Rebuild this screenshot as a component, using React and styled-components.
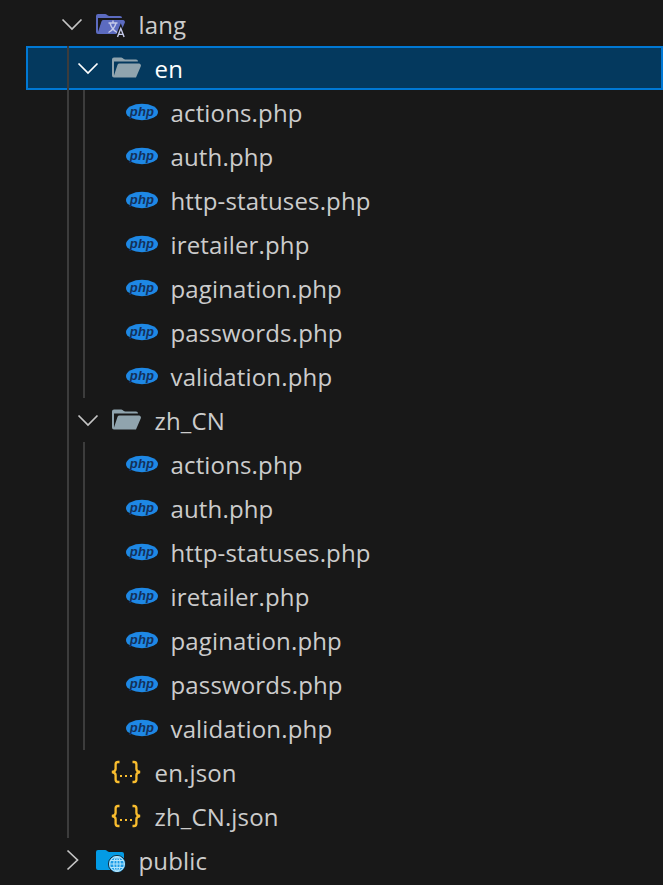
import React from "react";
import styled, { createGlobalStyle } from "styled-components";

const Global = createGlobalStyle`
  html, body { margin: 0; padding: 0; background: #181818; }
  body { overflow: hidden; }
`;

const Tree = styled.div`
  width: 637px;
  height: 885px;
  margin-left: 26px;
  padding-top: 2px;
  box-sizing: border-box;
  position: relative;
  font-family: "Open Sans", "Noto Sans", sans-serif;
  font-size: 24px;
  letter-spacing: 0.15px;
  color: #cccccc;
  overflow: hidden;
  &::before {
    content: "";
    position: absolute;
    left: -2px;
    top: 0;
    bottom: 0;
    width: 2px;
    background: #2f2f2f;
  }
`;

const Row = styled.div`
  position: relative;
  height: 44px;
  box-sizing: border-box;
  display: flex;
  align-items: center;
  padding-left: ${(p) => 34 + p.$depth * 16}px;
  background: ${(p) => (p.$selected ? "#04395e" : "transparent")};
  color: ${(p) => (p.$selected ? "#ffffff" : "#cccccc")};
  box-shadow: ${(p) => (p.$selected ? "inset 0 0 0 2px #0078d4" : "none")};
`;

const Guide = styled.span`
  position: absolute;
  top: 0;
  bottom: 0;
  left: ${(p) => p.$x - 26}px;
  width: 2px;
  background: #3c3c3c;
`;

const Twistie = styled.span`
  width: 36px;
  height: 44px;
  flex: none;
  display: flex;
  align-items: center;
  color: ${(p) => (p.$selected ? "#ffffff" : "#c5c5c5")};
`;

const IconBox = styled.span`
  width: 28px;
  height: 44px;
  margin-right: 14.5px;
  flex: none;
  display: flex;
  align-items: center;
  justify-content: center;
  overflow: visible;
  svg { flex: none; display: block; }
`;

const Label = styled.span`
  white-space: nowrap;
  line-height: 44px;
  position: relative;
  top: 1px;
`;

const ChevronDown = () => (
  <svg width="24" height="24" viewBox="0 0 24 24" fill="none" stroke="currentColor" strokeWidth="1.7">
    <path d="M2.5 7.5 12 17 21.5 7.5" />
  </svg>
);

const ChevronRight = () => (
  <svg width="24" height="24" viewBox="0 0 24 24" fill="none" stroke="currentColor" strokeWidth="1.7">
    <path d="M7.5 2.5 17.5 12 7.5 21.5" />
  </svg>
);

const FOLDER_OPEN =
  "M28.967 12H9.442a2 2 0 0 0-1.898 1.368L4 24V10h24a2 2 0 0 0-2-2H15.124a2 2 0 0 1-1.28-.464l-1.288-1.072A2 2 0 0 0 11.276 6H4a2 2 0 0 0-2 2v16a2 2 0 0 0 2 2h22l4.805-11.212A2 2 0 0 0 28.967 12";
const FOLDER_CLOSED =
  "M13.844 7.536l-1.288-1.072A2 2 0 0 0 11.276 6H4a2 2 0 0 0-2 2v16a2 2 0 0 0 2 2h24a2 2 0 0 0 2-2V10a2 2 0 0 0-2-2H15.124a2 2 0 0 1-1.28-.464";

const OpenFolder = () => (
  <svg width="32" height="32" viewBox="0 0 32 32">
    <path fill="#90a4ae" d={FOLDER_OPEN} transform="translate(0 -0.5)" />
  </svg>
);

const LangFolder = () => (
  <svg width="32" height="32" viewBox="0 0 32 32">
    <path fill="#5c6bc0" d={FOLDER_OPEN} />
    <path d="M8 14h19l-5 12H4z" fill="#5c6bc0" />
    <path d="M23 29.5l3.8-9.5 3.8 9.5" fill="none" stroke="#181818" strokeWidth="3.5" />
    <g fill="none" stroke="#c5cae9" strokeWidth="1.4">
      <path d="M14.5 15h9M19 12.5V15M16 15c1 3.8 3.6 7.5 7 9.5M22 15c-1 3.8-3.6 7.5-7.5 9.5" />
      <path d="M23.5 29l3.3-8.5 3.3 8.5M24.6 26.4h4.4" />
    </g>
  </svg>
);

const PublicFolder = () => (
  <svg width="32" height="32" viewBox="0 0 32 32">
    <path fill="#039be5" d={FOLDER_CLOSED} />
    <circle cx="23" cy="20" r="8.6" fill="#1c9be6" stroke="#181818" strokeWidth="0.8" />
    <g fill="none" stroke="#b3e5fc" strokeWidth="1.1">
      <circle cx="23" cy="20" r="7.4" />
      <ellipse cx="23" cy="20" rx="3.2" ry="7.4" />
      <path d="M15.6 20h14.8M16.6 16.5h12.8M16.6 23.5h12.8M23 12.6v14.8" />
    </g>
  </svg>
);

const PhpIcon = () => (
  <svg width="32" height="18" viewBox="0 0 32 18">
    <ellipse cx="16" cy="9" rx="16" ry="8.2" fill="#1e88e5" />
    <text x="16" y="12.6" textAnchor="middle" fontFamily="'Liberation Sans', sans-serif" fontSize="13" fontWeight="700" fontStyle="italic" fill="#14305a">php</text>
  </svg>
);

const JsonIcon = () => (
  <svg width="30" height="24" viewBox="0 0 30 24" fill="none" stroke="#f9bd2e" strokeWidth="2.3">
    <path d="M8.5 2H7C5.4 2 4.6 2.9 4.6 4.5v4.4C4.6 10.5 3.6 11.5 1 12c2.6.5 3.6 1.5 3.6 3.1v4.4c0 1.6.8 2.5 2.4 2.5h1.5" />
    <path d="M21.5 2H23c1.6 0 2.4.9 2.4 2.5v4.4c0 1.6 1 2.6 3.6 3.1-2.6.5-3.6 1.5-3.6 3.1v4.4c0 1.6-.8 2.5-2.4 2.5h-1.5" />
    <g fill="#f9bd2e" stroke="none">
      <rect x="9" y="15" width="2" height="2" />
      <rect x="14" y="15" width="2" height="2" />
      <rect x="19" y="15" width="2" height="2" />
    </g>
  </svg>
);

const files = ["actions.php", "auth.php", "http-statuses.php", "iretailer.php", "pagination.php", "passwords.php", "validation.php"];

const rows = [
  { name: "lang", depth: 0, chevron: "down", icon: <LangFolder />, guides: [] },
  { name: "en", depth: 1, chevron: "down", icon: <OpenFolder />, guides: [67], selected: true },
  ...files.map((name) => ({ name, depth: 2, icon: <PhpIcon />, guides: [67, 83] })),
  { name: "zh_CN", depth: 1, chevron: "down", icon: <OpenFolder />, guides: [67] },
  ...files.map((name) => ({ name, depth: 2, icon: <PhpIcon />, guides: [67, 83] })),
  { name: "en.json", depth: 1, icon: <JsonIcon />, guides: [67] },
  { name: "zh_CN.json", depth: 1, icon: <JsonIcon />, guides: [67] },
  { name: "public", depth: 0, chevron: "right", icon: <PublicFolder />, guides: [] },
];

export default function App() {
  return (
    <>
      <Global />
      <Tree>
        {rows.map((r, i) => (
          <Row key={i} $depth={r.depth} $selected={r.selected}>
            {r.guides.map((x) => (
              <Guide key={x} $x={x} />
            ))}
            <Twistie $selected={r.selected}>
              {r.chevron === "down" && <ChevronDown />}
              {r.chevron === "right" && <ChevronRight />}
            </Twistie>
            <IconBox>{r.icon}</IconBox>
            <Label>{r.name}</Label>
          </Row>
        ))}
      </Tree>
    </>
  );
}
